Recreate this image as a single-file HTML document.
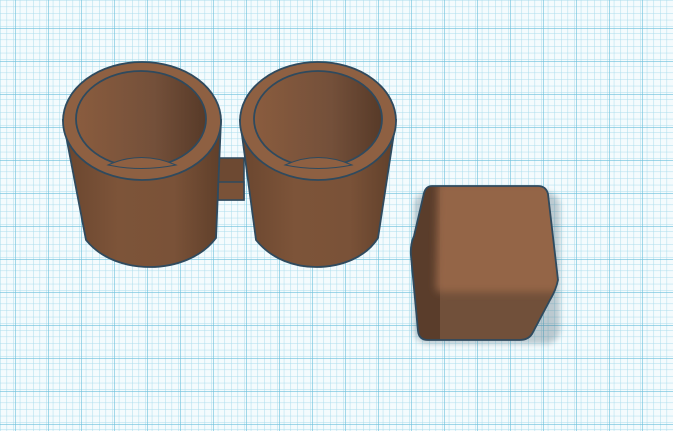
<!DOCTYPE html><html><head><style>html,body{margin:0;padding:0;overflow:hidden}body{width:673px;height:431px;background:#f4fbfd}</style></head><body>
<svg width="673" height="431" viewBox="0 0 673 431" xmlns="http://www.w3.org/2000/svg">
<defs>
<pattern id="mi" width="6.6" height="6.6" patternUnits="userSpaceOnUse"><path d="M0 0H6.6M0 0V6.6" stroke="#a9dcec" stroke-width="1" fill="none"/></pattern>
<pattern id="ma" x="15" y="28" width="33" height="33" patternUnits="userSpaceOnUse"><path d="M0 0H33M0 0V33" stroke="#6cc0dc" stroke-width="1.2" fill="none"/></pattern>
<linearGradient id="body" x1="0" x2="1"><stop offset="0" stop-color="#6a462f"/><stop offset="0.35" stop-color="#7d5439"/><stop offset="0.7" stop-color="#7a5238"/><stop offset="1" stop-color="#5f3f2a"/></linearGradient>
<linearGradient id="inner" x1="0" x2="1"><stop offset="0" stop-color="#8a5c3e"/><stop offset="0.6" stop-color="#74503a"/><stop offset="1" stop-color="#573a28"/></linearGradient>
<clipPath id="cc"><path d="M432 186 H538 Q546 186 548 194 L558 280 Q556 290 550 300 L532 334 Q528 340 520 340 H428 Q419 340 418 331 L411 256 Q410 245 414 236 L424 193 Q426 186 432 186Z"/></clipPath>
<filter id="sh"><feGaussianBlur stdDeviation="3"/></filter>
<filter id="bl"><feGaussianBlur stdDeviation="4"/></filter>
</defs>
<rect width="673" height="431" fill="#f4fbfd"/>
<rect width="673" height="431" fill="url(#mi)"/>
<rect width="673" height="431" fill="url(#ma)"/>
<rect x="218" y="158" width="26" height="42" fill="#6d4932" stroke="#2f4a5e" stroke-width="1.5"/>
<rect x="218" y="182" width="26" height="18" fill="#7a5238" stroke="#2f4a5e" stroke-width="1.5"/>
<g stroke="#2f4a5e" stroke-width="1.8">
<path d="M63 120 L86 240 C102 260 128 267 150 267 C176 267 202 257 216 238 L221 120 Z" fill="url(#body)"/>
<ellipse cx="142" cy="121" rx="79" ry="59" fill="#8e6042"/>
<ellipse cx="141" cy="119" rx="65" ry="48" fill="url(#inner)"/>
<path d="M108 165 Q141 150 176 165 Q141 172 108 165Z" fill="#8e6042" stroke-width="1"/>
</g>
<g stroke="#2f4a5e" stroke-width="1.8">
<path d="M240 120 L256 240 C272 260 296 267 316 267 C342 267 366 257 378 238 L396 120 Z" fill="url(#body)"/>
<ellipse cx="318" cy="121" rx="78" ry="59" fill="#8e6042"/>
<ellipse cx="318" cy="119" rx="64" ry="48" fill="url(#inner)"/>
<path d="M285 165 Q318 150 352 165 Q318 172 285 165Z" fill="#8e6042" stroke-width="1"/>
</g>
<rect x="414" y="192" width="146" height="152" rx="14" fill="#3a5a6a" opacity="0.3" filter="url(#sh)"/>
<g clip-path="url(#cc)">
<rect x="400" y="180" width="170" height="170" fill="#71503a"/>
<rect x="405" y="180" width="35" height="170" fill="#5a3d2b"/>
<path d="M438 183 H560 V292 H440 Q436 292 436 286 Z" fill="#946547" filter="url(#bl)"/>
</g>
<path d="M432 186 H538 Q546 186 548 194 L558 280 Q556 290 550 300 L532 334 Q528 340 520 340 H428 Q419 340 418 331 L411 256 Q410 245 414 236 L424 193 Q426 186 432 186Z" fill="none" stroke="#2f4a5e" stroke-width="1.8"/>
</svg>
</body></html>
